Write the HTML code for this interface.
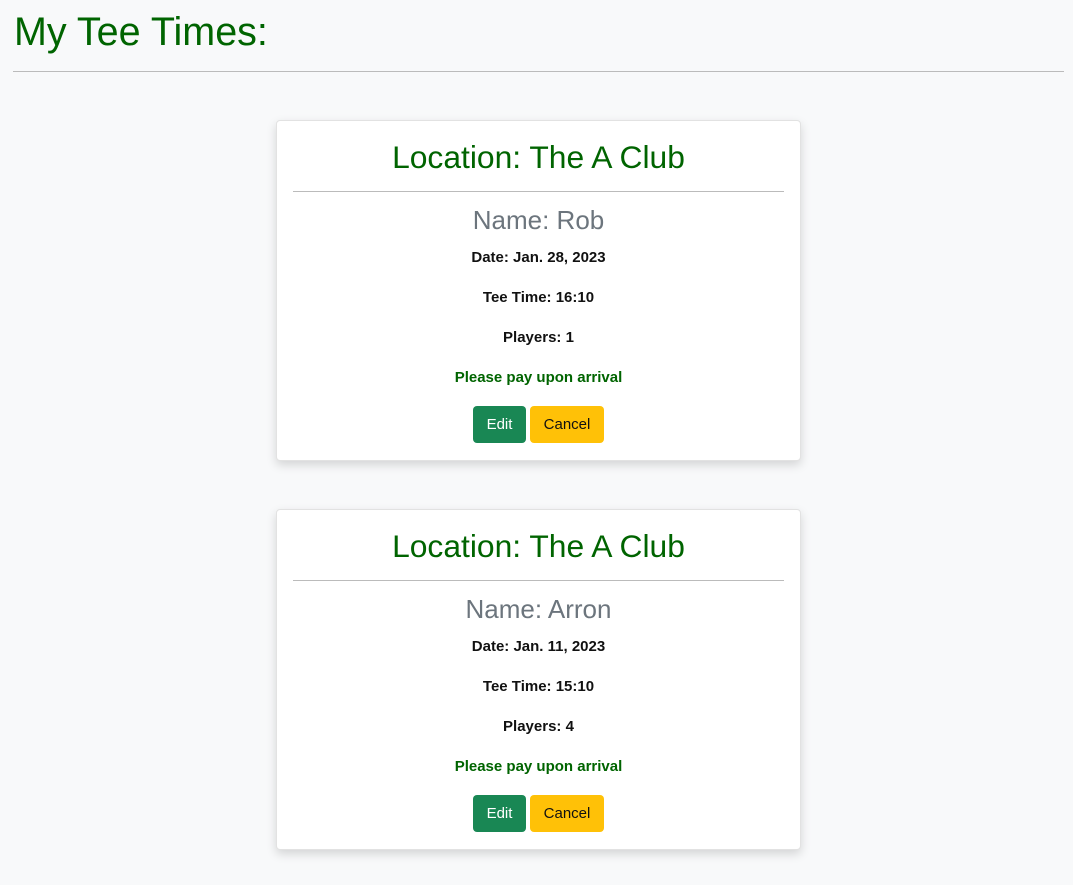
<!DOCTYPE html>
<html><head><style>
body{margin:0;background:#f8f9fa;font-family:"Liberation Sans",sans-serif;width:1073px;height:885px;position:relative;overflow:hidden}
h1{position:absolute;left:14px;top:9px;margin:0;font-weight:400;font-size:39.5px;color:#006400;line-height:46px}
.hr0{position:absolute;left:13px;width:1051px;top:71px;border-top:1px solid #bbb}
.card{position:absolute;left:276px;width:525px;height:341px;background:#fff;border:1px solid #e2e2e2;border-radius:4px;box-shadow:0 4px 10px rgba(0,0,0,.15);box-sizing:border-box}
.card *{position:absolute;left:0;right:0;text-align:center;margin:0}
.t{top:17px;font-size:31.8px;color:#006400;line-height:38px}
.hr{left:16px;right:16px;top:70px;border-top:1px solid #bbb}
.n{top:83px;font-size:26px;color:#6c757d;line-height:32px}
.p{font-size:15px;font-weight:bold;color:#111;line-height:18px}
.g{color:#006400}
.b{top:285px;height:37px}
.btn{position:absolute;top:0;height:37px;line-height:37px;border-radius:4px;font-size:15px;text-align:center}
</style></head><body>
<h1>My Tee Times:</h1><div class="hr0"></div>
<div class="card" style="top:120px">
<div class="t">Location: The A Club</div><div class="hr"></div>
<div class="n">Name: Rob</div>
<div class="p" style="top:128px">Date: Jan. 28, 2023</div>
<div class="p" style="top:168px">Tee Time: 16:10</div>
<div class="p" style="top:208px">Players: 1</div>
<div class="p g" style="top:248px">Please pay upon arrival</div>
<div class="b"><span class="btn" style="left:196px;right:auto;width:53px;background:#198754;color:#fff">Edit</span><span class="btn" style="left:253px;right:auto;width:74px;background:#ffc107;color:#111">Cancel</span></div>
</div>
<div class="card" style="top:509px">
<div class="t">Location: The A Club</div><div class="hr"></div>
<div class="n">Name: Arron</div>
<div class="p" style="top:128px">Date: Jan. 11, 2023</div>
<div class="p" style="top:168px">Tee Time: 15:10</div>
<div class="p" style="top:208px">Players: 4</div>
<div class="p g" style="top:248px">Please pay upon arrival</div>
<div class="b"><span class="btn" style="left:196px;right:auto;width:53px;background:#198754;color:#fff">Edit</span><span class="btn" style="left:253px;right:auto;width:74px;background:#ffc107;color:#111">Cancel</span></div>
</div>
</body></html>
